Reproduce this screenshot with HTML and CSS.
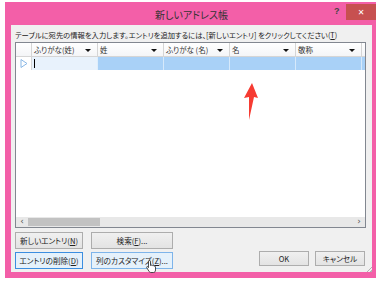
FILE: index.html
```html
<!DOCTYPE html>
<html lang="ja">
<head>
    <meta charset="UTF-8">
    <title>新しいアドレス帳</title>
    <link rel="stylesheet" href="styles.css">
</head>
<body>
    <div class="window">
        <div class="titlebar">
            <span class="title">新しいアドレス帳</span>
            <span class="help">?</span>
            <span class="close">✕</span>
        </div>
        <div class="content">
            <p class="hint">テーブルに宛先の情報を入力します。エントリを追加するには、[新しいエントリ] をクリックしてください(<u>T</u>)</p>
            <div class="grid">
                <div class="row head">
                    <div class="sel"></div>
                    <div class="cell">ふりがな(姓)<i class="drop"></i></div>
                    <div class="cell">姓<i class="drop"></i></div>
                    <div class="cell">ふりがな (名)<i class="drop"></i></div>
                    <div class="cell">名<i class="drop"></i></div>
                    <div class="cell">敬称<i class="drop"></i></div>
                    <div class="filler"></div>
                </div>
                <div class="row data">
                    <div class="sel">
                        <svg width="8" height="9" viewBox="0 0 8 9"><path d="M1 0.5 L7 4.5 L1 8.5 Z" fill="none" stroke="#8ab8e6" stroke-width="1"/></svg>
                    </div>
                    <div class="cell edit"><span class="caret"></span></div>
                    <div class="cell on"></div>
                    <div class="cell on"></div>
                    <div class="cell on"></div>
                    <div class="cell on"></div>
                    <div class="filler"></div>
                </div>
                <div class="body">
                    <svg class="arrow" width="16" height="40" viewBox="0 0 16 40">
                        <path d="M9 0 L15 15 L11 14 L6 37 L6 14 L1 15 Z" fill="#f63b32"/>
                    </svg>
                </div>
                <div class="hscroll">
                    <span class="btn-s">&lsaquo;</span>
                    <span class="thumb"></span>
                    <span class="track"></span>
                    <span class="btn-s">&rsaquo;</span>
                </div>
            </div>
            <div class="actions">
                <div class="left">
                    <button class="btn">新しいエントリ(<u>N</u>)</button>
                    <button class="btn wide">検索(<u>F</u>)...</button>
                    <button class="btn focus">エントリの削除(<u>D</u>)</button>
                    <button class="btn wide hover">列のカスタマイズ(<u>Z</u>)...
                        <svg class="pointer" width="11" height="13" viewBox="0 0 11 13">
                            <path d="M3.5 0.5 C4.3 0.5 4.5 1 4.5 1.8 V5.5 C5 5 6 5 6.3 5.7 C6.8 5.3 7.7 5.4 8 6.2 C8.5 5.9 9.5 6.1 9.5 7 V10 C9.5 11.5 8.7 12.5 7.5 12.5 H5 C4 12.5 3.4 12 2.8 11 L0.7 7.6 C0.3 6.9 1.2 6.2 1.9 6.8 L2.5 7.6 V1.8 C2.5 1 2.8 0.5 3.5 0.5 Z" fill="#fff" stroke="#222" stroke-width="0.8"/>
                        </svg>
                    </button>
                </div>
                <div class="right">
                    <button class="btn small">OK</button>
                    <button class="btn small">キャンセル</button>
                </div>
            </div>
        </div>
        <span class="grip"></span>
    </div>
</body>
</html>
```

FILE: styles.css
```css
body {
    margin: 0;
    background-color: #fff;
    font-family: "Noto Sans CJK JP", "Noto Sans", sans-serif;
    font-feature-settings: "palt";
    color: #222;
}

.window {
    position: relative;
    margin: 2px 0 0 5px;
    width: 371px;
    height: 276px;
    box-sizing: border-box;
    padding: 0 4px 6px 6px;
    background-color: #f35fa8;
    display: flex;
    flex-direction: column;
}

.titlebar {
    position: relative;
    height: 23px;
    display: flex;
    justify-content: center;
    align-items: center;
}

.title {
    font-size: 10px;
    color: #333;
    margin-top: 2px;
}

.help {
    position: absolute;
    left: 323px;
    top: 4px;
    font-family: "Liberation Sans", sans-serif;
    font-size: 9px;
    font-weight: bold;
    color: #444;
}

.close {
    position: absolute;
    left: 335px;
    top: 2px;
    width: 30px;
    height: 16px;
    background-color: #c75050;
    color: #fff;
    font-size: 8px;
    font-family: "DejaVu Sans", sans-serif;
    display: flex;
    justify-content: center;
    align-items: center;
}

.content {
    flex: 1;
    background-color: #f0f0f0;
    padding: 4px 6px 0 4px;
    display: flex;
    flex-direction: column;
}

.hint {
    margin: 0;
    height: 13px;
    font-size: 7.3px;
    line-height: 12px;
    white-space: nowrap;
    color: #222;
}

.grid {
    height: 186px;
    box-sizing: border-box;
    border: 1px solid #828790;
    background-color: #fff;
    display: flex;
    flex-direction: column;
}

.row {
    display: flex;
    height: 13px;
}

.row.head {
    height: 14px;
    background: linear-gradient(#fff, #f4f5f7);
    border-bottom: 1px solid #d5d5d5;
    box-sizing: border-box;
}

.sel {
    width: 15px;
    border-right: 1px solid #d5d5d5;
    display: flex;
    align-items: center;
    justify-content: center;
    flex: none;
}

.cell {
    position: relative;
    border-right: 1px solid #d5d5d5;
    flex: none;
    font-size: 7.5px;
    line-height: 13px;
    padding-left: 2px;
    width: 63px;
    white-space: nowrap;
    color: #333;
}

.filler {
    flex: 1;
}

.drop {
    position: absolute;
    right: 6px;
    top: 6px;
    border-left: 3px solid transparent;
    border-right: 3px solid transparent;
    border-top: 3px solid #111;
}

.row.data .sel {
    background-color: #fff;
}

.cell.edit {
    background-color: #e8f2fc;
    border-right-color: #dfeefb;
}

.cell.on {
    background-color: #a9d1f7;
    border-right-color: #d6e9fb;
}

.row.data .filler {
    background-color: #a9d1f7;
}

.caret {
    display: inline-block;
    width: 1px;
    height: 9px;
    margin-top: 2px;
    background-color: #000;
    vertical-align: top;
}

.body {
    flex: 1;
    position: relative;
}

.arrow {
    position: absolute;
    left: 227px;
    top: 13px;
}

.hscroll {
    height: 10px;
    display: flex;
    background-color: #e8e8e8;
}

.btn-s {
    width: 12px;
    font-size: 9px;
    line-height: 9px;
    text-align: center;
    color: #555;
    font-family: "DejaVu Sans", sans-serif;
}

.thumb {
    width: 72px;
    margin: 1px 0;
    background-color: #c2c2c2;
}

.track {
    flex: 1;
}

.actions {
    display: flex;
    justify-content: space-between;
    margin-top: 4px;
}

.left {
    display: grid;
    grid-template-columns: 68px 82px;
    grid-auto-rows: 17px;
    column-gap: 8px;
    row-gap: 3px;
}

.btn {
    position: relative;
    margin: 0;
    padding: 0;
    font-family: inherit;
    font-feature-settings: "palt";
    font-size: 7.6px;
    color: #222;
    background: linear-gradient(#f0f0f0, #e3e3e3);
    border: 1px solid #adadad;
    white-space: nowrap;
}

.btn.focus {
    border-color: #3c8ee0;
    background: #e5f1fb;
}

.btn.hover {
    border-color: #7eb4ea;
    background: #e5f1fb;
}

.pointer {
    position: absolute;
    left: 54px;
    top: 7px;
}

.right {
    display: flex;
    gap: 6px;
    align-items: flex-start;
    padding-top: 19px;
    padding-right: 1px;
}

.btn.small {
    width: 50px;
    height: 15px;
}

.grip {
    position: absolute;
    right: 4px;
    bottom: 6px;
    width: 6px;
    height: 6px;
    background: linear-gradient(135deg, transparent 55%, #b0b0b0 55%, #b0b0b0 65%, transparent 65%, transparent 80%, #b0b0b0 80%);
}
```
